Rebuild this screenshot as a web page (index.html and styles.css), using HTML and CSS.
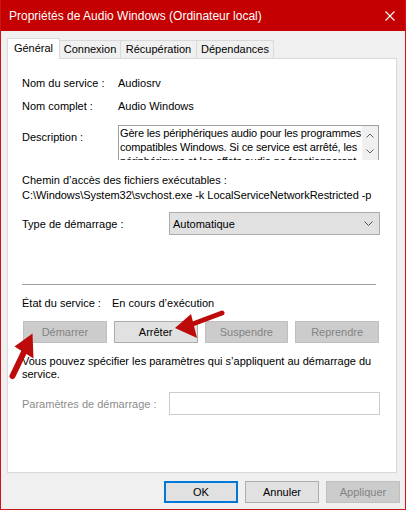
FILE: index.html
```html
<!DOCTYPE html>
<html lang="fr">
<head>
<meta charset="utf-8">
<title>Propriétés de Audio Windows</title>
<link rel="stylesheet" href="styles.css">
</head>
<body>
<div class="window">
  <div class="titlebar">
    <span class="title">Propriétés de Audio Windows (Ordinateur local)</span>
    <svg class="close" width="10" height="10" viewBox="0 0 10 10"><path d="M0.5 0.5 L9.5 9.5 M9.5 0.5 L0.5 9.5" stroke="#fff" stroke-width="1.1" fill="none"/></svg>
  </div>
  <div class="client">
    <div class="tabs">
      <div class="tab tab-active tab-general">Général</div>
      <div class="tab tab-connexion">Connexion</div>
      <div class="tab tab-recup">Récupération</div>
      <div class="tab tab-dep">Dépendances</div>
    </div>
    <div class="panel">
      <div class="row row-first">
        <span class="label label-info">Nom du service :</span>
        <span class="value">Audiosrv</span>
      </div>
      <div class="row row-second">
        <span class="label label-info">Nom complet :</span>
        <span class="value">Audio Windows</span>
      </div>
      <div class="row row-desc">
        <span class="label label-info label-desc">Description :</span>
        <div class="descbox">
          <div class="desctext">
            <span class="descline">Gère les périphériques audio pour les programmes</span>
            <span class="descline">compatibles Windows. Si ce service est arrêté, les</span>
            <span class="descline">périphériques et les effets audio ne fonctionneront</span>
          </div>
          <div class="scrollbar">
            <svg width="8" height="5" viewBox="0 0 8 5"><polyline points="0.5,4.5 4,1 7.5,4.5" fill="none" stroke="#606060" stroke-width="1"/></svg>
            <svg width="8" height="5" viewBox="0 0 8 5"><polyline points="0.5,0.5 4,4 7.5,0.5" fill="none" stroke="#606060" stroke-width="1"/></svg>
          </div>
        </div>
      </div>
      <div class="pathlabel">Chemin d’accès des fichiers exécutables :</div>
      <div class="pathvalue">C:\Windows\System32\svchost.exe -k LocalServiceNetworkRestricted -p</div>
      <div class="row row-type">
        <span class="label label-wide">Type de démarrage :</span>
        <div class="select">
          <span>Automatique</span>
          <svg width="9" height="5" viewBox="0 0 9 5"><polyline points="0.5,0.5 4.5,4.5 8.5,0.5" fill="none" stroke="#505050" stroke-width="1"/></svg>
        </div>
      </div>
      <div class="separator"></div>
      <div class="row row-state">
        <span class="label label-state">État du service :</span>
        <span class="value">En cours d’exécution</span>
      </div>
      <div class="actions">
        <div class="btn btn-disabled">Démarrer</div>
        <div class="btn">Arrêter</div>
        <div class="btn btn-disabled">Suspendre</div>
        <div class="btn btn-disabled">Reprendre</div>
      </div>
      <p class="hint">Vous pouvez spécifier les paramètres qui s’appliquent au démarrage du<br>service.</p>
      <div class="row row-params">
        <span class="label label-wide label-muted">Paramètres de démarrage :</span>
        <div class="input"></div>
      </div>
    </div>
    <div class="footer">
      <div class="btn btn-foot btn-default">OK</div>
      <div class="btn btn-foot">Annuler</div>
      <div class="btn btn-foot btn-disabled">Appliquer</div>
    </div>
  </div>
  <svg class="arrows" width="406" height="511" viewBox="0 0 406 511">
    <line x1="12.5" y1="376" x2="24" y2="352" stroke="#bd0b0b" stroke-width="6" stroke-linecap="round"/>
    <polygon points="32.5,333.5 14.5,346.5 33.5,358.5" fill="#bd0b0b"/>
    <line x1="222" y1="313" x2="190" y2="325" stroke="#bd0b0b" stroke-width="5" stroke-linecap="round"/>
    <polygon points="175,328 191,314 197,338" fill="#bd0b0b"/>
  </svg>
</div>
</body>
</html>
```

FILE: styles.css
```css
* { box-sizing: border-box; }

html, body {
  margin: 0;
  padding: 0;
  background: #ffffff;
}

body {
  font-family: "Liberation Sans", Arial, sans-serif;
  font-size: 11px;
  color: #000;
}

.window {
  position: relative;
  width: 406px;
  height: 510px;
  border: 1px solid #c8141a;
  background: #f0f0f0;
  display: flex;
  flex-direction: column;
}

.titlebar {
  background: #c40000;
  display: flex;
  align-items: center;
  justify-content: space-between;
  padding: 0 10px 0 8px;
  margin-top: -1px;
  height: 31px;
}

.title {
  color: #fff;
  font-size: 12px;
  line-height: 30px;
  padding-top: 1px;
}

.close {
  display: block;
}

.client {
  padding: 7px 7px 0 6px;
}

.tabs {
  display: flex;
  align-items: flex-end;
  height: 20px;
  position: relative;
  z-index: 2;
}

.tab {
  height: 18px;
  border: 1px solid #d9d9d9;
  border-bottom: none;
  background: #f0f0f0;
  text-align: center;
  line-height: 17px;
  margin-left: -1px;
  white-space: nowrap;
}

.tab-active {
  height: 21px;
  margin-bottom: -1px;
  background: #fff;
  margin-left: 0;
  line-height: 18px;
  position: relative;
  z-index: 3;
}

.tab-general { width: 53px; }
.tab-connexion { width: 62px; }
.tab-recup { width: 77px; }
.tab-dep { width: 78px; }

.panel {
  position: relative;
  z-index: 1;
  width: 390px;
  height: 415px;
  background: #fff;
  border: 1px solid #d9d9d9;
  padding: 16px 16px 0 14px;
}

.row {
  display: flex;
  align-items: flex-start;
  line-height: 16px;
}

.label { flex: none; }
.label-info { width: 96px; }
.label-wide { width: 147px; }
.label-state { width: 90px; }
.label-muted { color: #8c8c8c; }

.row-second { margin-top: 7px; }

.row-desc { margin-top: 11px; }
.label-desc { padding-top: 4px; }

.descbox {
  flex: 1;
  margin-right: 1px;
  height: 35px;
  border: 1px solid #a0a0a0;
  border-bottom: none;
  display: flex;
  overflow: hidden;
}

.desctext {
  flex: 1;
  min-width: 0;
  padding-left: 1px;
  line-height: 14px;
  overflow: hidden;
}

.descline {
  display: block;
  white-space: nowrap;
  letter-spacing: -0.15px;
}

.scrollbar {
  width: 16px;
  flex: none;
  background: #f0f0f0;
  display: flex;
  flex-direction: column;
  align-items: center;
  padding-top: 7px;
  gap: 11px;
}

.scrollbar svg { display: block; }

.pathlabel {
  margin-top: 13px;
  line-height: 15px;
}

.pathvalue {
  line-height: 15px;
  white-space: nowrap;
  letter-spacing: -0.05px;
}

.row-type {
  margin-top: 9px;
  align-items: center;
}

.select {
  flex: 1;
  height: 23px;
  background: #e1e1e1;
  border: 1px solid #adadad;
  display: flex;
  align-items: center;
  justify-content: space-between;
  padding: 0 6px 0 3px;
}

.select svg { display: block; }

.separator {
  margin-top: 49px;
  margin-right: 4px;
  height: 1px;
  background: #a0a0a0;
}

.row-state { margin-top: 10px; }

.actions {
  margin: 10px 1px 0 1px;
  display: grid;
  grid-template-columns: repeat(4, 1fr);
  gap: 7px;
}

.btn {
  height: 22px;
  background: #e1e1e1;
  border: 1px solid #adadad;
  display: flex;
  align-items: center;
  justify-content: center;
  color: #000;
}

.btn-disabled {
  background: #cccccc;
  border-color: #bfbfbf;
  color: #838383;
}

.hint {
  margin: 12px 0 0 0;
  line-height: 13px;
}

.row-params {
  margin-top: 11px;
  align-items: center;
}

.input {
  flex: 1;
  height: 23px;
  border: 1px solid #cccccc;
  background: #fff;
}

.footer {
  display: flex;
  justify-content: flex-end;
  gap: 7px;
  padding-top: 8px;
  margin-right: -2px;
}

.btn-foot { width: 74px; }

.btn-default {
  border: 2px solid #0078d7;
}

.arrows {
  position: absolute;
  top: -1px;
  left: -1px;
  pointer-events: none;
  z-index: 5;
}
```
